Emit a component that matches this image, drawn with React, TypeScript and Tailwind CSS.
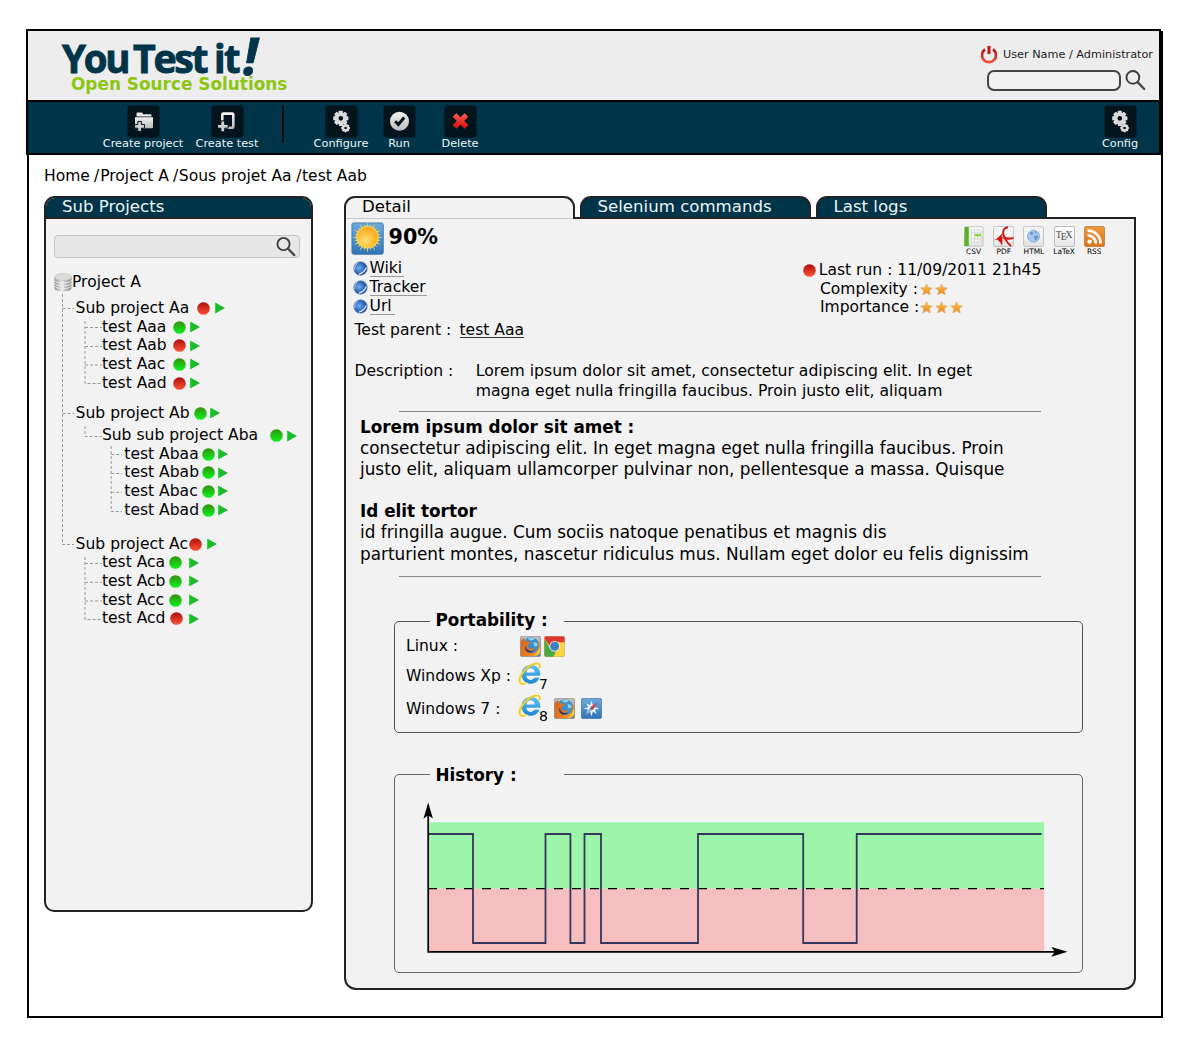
import type { ReactNode } from 'react';

const Magnifier = ({ className }: { className?: string }) => (
  <svg viewBox="0 0 21 21" className={className} fill="none">
    <circle cx="7.9" cy="7.4" r="6.4" stroke="#3c3c3c" strokeWidth="1.9" />
    <path d="M12.6 12.2 L19.2 19" stroke="#4a4a4a" strokeWidth="2.4" strokeLinecap="round" />
  </svg>
);

const Defs = () => (
  <svg className="absolute h-0 w-0" aria-hidden="true">
    <defs>
      <linearGradient id="silver" x1="0" y1="0" x2="0" y2="1">
        <stop offset="0" stopColor="#f2f2f2" />
        <stop offset="1" stopColor="#bdbdbd" />
      </linearGradient>
      <linearGradient id="redDot" x1="0" y1="0" x2="0" y2="1">
        <stop offset="0" stopColor="#ad0d0d" />
        <stop offset="1" stopColor="#fb5537" />
      </linearGradient>
      <linearGradient id="greenDot" x1="0" y1="0" x2="0" y2="1">
        <stop offset="0" stopColor="#358f0c" />
        <stop offset="1" stopColor="#0cf420" />
      </linearGradient>
      <linearGradient id="playFill" x1="0" y1="0" x2="1" y2="0">
        <stop offset="0" stopColor="#0ccb20" />
        <stop offset="1" stopColor="#2ea53a" />
      </linearGradient>
      <linearGradient id="cross" x1="0" y1="0" x2="0" y2="1">
        <stop offset="0" stopColor="#ff5a50" />
        <stop offset="1" stopColor="#d80d0d" />
      </linearGradient>
      <linearGradient id="powerRed" x1="0" y1="0" x2="0" y2="1">
        <stop offset="0" stopColor="#b01010" />
        <stop offset="1" stopColor="#f05038" />
      </linearGradient>
      <linearGradient id="skyBlue" x1="0" y1="0" x2="0" y2="1">
        <stop offset="0" stopColor="#6caadf" />
        <stop offset="1" stopColor="#2f74b8" />
      </linearGradient>
      <radialGradient id="sunFill" cx="0.4" cy="0.65" r="0.65">
        <stop offset="0" stopColor="#ffe07a" />
        <stop offset="0.5" stopColor="#ffc23a" />
        <stop offset="1" stopColor="#fba51e" />
      </radialGradient>
      <radialGradient id="globeFill" cx="0.4" cy="0.45" r="0.6">
        <stop offset="0" stopColor="#6fb0ee" />
        <stop offset="0.6" stopColor="#2f6cbe" />
        <stop offset="1" stopColor="#1c3f98" />
      </radialGradient>
      <linearGradient id="starFill" x1="0" y1="0" x2="0" y2="1">
        <stop offset="0" stopColor="#ffc24a" />
        <stop offset="1" stopColor="#ee8a1d" />
      </linearGradient>
      <linearGradient id="paper" x1="0" y1="0" x2="0" y2="1">
        <stop offset="0" stopColor="#ffffff" />
        <stop offset="1" stopColor="#e4e4e4" />
      </linearGradient>
      <linearGradient id="rssFill" x1="0" y1="0" x2="0" y2="1">
        <stop offset="0" stopColor="#ec9a3c" />
        <stop offset="1" stopColor="#d9731a" />
      </linearGradient>
      <linearGradient id="ieBlue" x1="0" y1="0" x2="0" y2="1">
        <stop offset="0" stopColor="#5cc4f4" />
        <stop offset="1" stopColor="#1d86d2" />
      </linearGradient>
      <linearGradient id="diskFill" x1="0" y1="0" x2="1" y2="0">
        <stop offset="0" stopColor="#8c8c8c" />
        <stop offset="0.4" stopColor="#e6e6e6" />
        <stop offset="1" stopColor="#8a8a8a" />
      </linearGradient>
      <linearGradient id="foxFill" x1="0" y1="0" x2="1" y2="1">
        <stop offset="0" stopColor="#d5651a" />
        <stop offset="0.6" stopColor="#e8791e" />
        <stop offset="1" stopColor="#f9b52a" />
      </linearGradient>
      <linearGradient id="tile" x1="0" y1="0" x2="0" y2="1">
        <stop offset="0" stopColor="#c4c4c4" />
        <stop offset="1" stopColor="#7d7d7d" />
      </linearGradient>
    </defs>
  </svg>
);

const gearTeeth = [0, 45, 90, 135, 180, 225, 270, 315];

const Gear = ({ cx, cy, r }: { cx: number; cy: number; r: number }) => (
  <g transform={`translate(${cx} ${cy}) scale(${r / 8})`}>
    {gearTeeth.map((a) => (
      <rect key={a} x="-2.1" y="-8" width="4.2" height="5" rx="0.6" fill="#dedede" transform={`rotate(${a})`} />
    ))}
    <circle r="4.5" fill="none" stroke="#dadada" strokeWidth="4" />
  </g>
);

const GearsIcon = () => (
  <svg viewBox="0 0 31 31" className="size-[31px]">
    <Gear cx={14.8} cy={12.3} r={7.6} />
    <Gear cx={19.6} cy={22} r={4.3} />
  </svg>
);

const FolderIcon = () => (
  <svg viewBox="0 0 31 31" className="size-[31px]">
    <path d="M8.5 7.5 q0-1 1-1 h4.2 q.8 0 1 .8 l.3 1 h7.5 q1 0 1 1 v1.2 h-15z" fill="#e8e8e8" />
    <path d="M7 11.3 H25 V21.3 q0 .9-.9.9 H7z" fill="url(#silver)" />
    <path d="M9.8 15.4 h3.6 v3.2 h3.2 v3.6 h-3.2 v3.2 h-3.6 v-3.2 H6.6 v-3.6 h3.2z" fill="#d4d4d4" stroke="#03141c" strokeWidth="1" />
  </svg>
);

const TestIcon = () => (
  <svg viewBox="0 0 31 31" className="size-[31px]">
    <rect x="10.3" y="7.6" width="11" height="14.2" rx="1" fill="none" stroke="url(#silver)" strokeWidth="2.6" />
    <path d="M8.9 14.9 h3.8 v3.6 h3.5 v3.7 h-3.5 v3.6 H8.9 v-3.6 H5.5 v-3.7 h3.4z" fill="#cfcfcf" stroke="#03141c" strokeWidth="1" />
  </svg>
);

const RunIcon = () => (
  <svg viewBox="0 0 31 31" className="size-[31px]">
    <circle cx="15.5" cy="15.2" r="9.5" fill="url(#silver)" />
    <path d="M11.2 15.3 L14.4 18.5 L20.2 11.5" fill="none" stroke="#03141c" strokeWidth="3" />
  </svg>
);

const DeleteIcon = () => (
  <svg viewBox="0 0 31 31" className="size-[31px]">
    <path
      d="M8.1 10.8 L11.3 7.6 L15.5 11.8 L19.7 7.6 L22.9 10.8 L18.8 15 L22.9 19.2 L19.7 22.4 L15.5 18.2 L11.3 22.4 L8.1 19.2 L12.2 15z"
      fill="url(#cross)"
      stroke="url(#cross)"
      strokeWidth="0.8"
      strokeLinejoin="round"
    />
  </svg>
);

const Tool = ({ label, children, className }: { label: string; children: ReactNode; className: string }) => (
  <div className={`flex shrink-0 flex-col items-center ${className}`}>
    <div className="size-[31px] rounded-[3px] bg-[#03141c] shadow-[0_0_1px_1px_rgba(2,30,44,0.8)]">{children}</div>
    <span className="-mt-px text-[11.3px] leading-[15px] whitespace-nowrap text-[#eef2f4]">{label}</span>
  </div>
);

const Dot = ({ color }: { color: 'red' | 'green' }) => (
  <svg viewBox="0 0 13 13" className="size-[13px] shrink-0">
    <circle cx="6.5" cy="6.5" r="6.3" fill={color === 'red' ? 'url(#redDot)' : 'url(#greenDot)'} />
  </svg>
);

const Play = () => (
  <svg viewBox="0 0 10 12" className="h-3 w-2.5 shrink-0">
    <path d="M0.2 0.5 L10 6 L0.2 11.5z" fill="url(#playFill)" />
  </svg>
);

type Row = { label: string; color: 'red' | 'green'; row: string; text: string; gap: string };

const rows: Row[] = [
  { label: 'Sub project Aa', color: 'red', row: 'pl-[29.6px]', text: 'w-[121.4px]', gap: 'gap-[5px]' },
  { label: 'test Aaa', color: 'green', row: 'pl-[55.9px]', text: 'w-[71.6px]', gap: 'gap-[3.5px]' },
  { label: 'test Aab', color: 'red', row: 'pl-[55.9px]', text: 'w-[71.1px]', gap: 'gap-[4.5px]' },
  { label: 'test Aac', color: 'green', row: 'pl-[55.9px]', text: 'w-[71.6px]', gap: 'gap-[3.5px]' },
  { label: 'test Aad', color: 'red', row: 'pl-[55.9px]', text: 'w-[71.1px]', gap: 'gap-[4.5px]' },
  { label: 'Sub project Ab', color: 'green', row: 'mt-[11.3px] pl-[29.6px]', text: 'w-[118.2px]', gap: 'gap-[3.5px]' },
  { label: 'Sub sub project Aba', color: 'green', row: 'mt-[4px] pl-[55.9px]', text: 'w-[168.2px]', gap: 'gap-[3.5px]' },
  { label: 'test Abaa', color: 'green', row: '-mt-[0.2px] pl-[78.3px]', text: 'w-[77.5px]', gap: 'gap-[3.3px]' },
  { label: 'test Abab', color: 'green', row: 'pl-[78.3px]', text: 'w-[77.5px]', gap: 'gap-[3.3px]' },
  { label: 'test Abac', color: 'green', row: 'pl-[78.3px]', text: 'w-[77.5px]', gap: 'gap-[3.3px]' },
  { label: 'test Abad', color: 'green', row: 'pl-[78.3px]', text: 'w-[77.5px]', gap: 'gap-[3.3px]' },
  { label: 'Sub project Ac', color: 'red', row: 'mt-[15.3px] pl-[29.6px]', text: 'w-[113.9px]', gap: 'gap-[4.5px]' },
  { label: 'test Aca', color: 'green', row: 'pl-[55.9px]', text: 'w-[67.6px]', gap: 'gap-[6.3px]' },
  { label: 'test Acb', color: 'green', row: 'pl-[55.9px]', text: 'w-[67.6px]', gap: 'gap-[6.3px]' },
  { label: 'test Acc', color: 'green', row: 'pl-[55.9px]', text: 'w-[67.6px]', gap: 'gap-[6.3px]' },
  { label: 'test Acd', color: 'red', row: 'pl-[55.9px]', text: 'w-[67.9px]', gap: 'gap-[6px]' },
];

const TreeLines = () => (
  <svg viewBox="0 0 100 340" className="absolute top-[96px] left-2 h-[340px] w-[100px]" fill="none" stroke="#9a9a9a" strokeDasharray="3 2">
    <path d="M8.5 0 V250.5 H20 M8.5 14.5 H20 M8.5 119.5 H20" />
    <path d="M31 27 V89.5 H48 M31 33.5 H48 M31 52.5 H48 M31 71 H48" />
    <path d="M31 132 V142.5 H48" />
    <path d="M57.2 152 V217.5 H68 M57.2 160.5 H68 M57.2 179.5 H68 M57.2 198.3 H68" />
    <path d="M31 263 V325.5 H48 M31 269.5 H48 M31 288.3 H48 M31 307 H48" />
  </svg>
);

const DiskIcon = () => (
  <svg viewBox="0 0 18 19" className="h-[19px] w-[18px] shrink-0">
    <path d="M0.5 4 V15 Q0.5 18.4 9 18.4 Q17.5 18.4 17.5 15 V4z" fill="url(#diskFill)" />
    <path d="M0.5 7.2 Q1.5 10 9 10 T17.5 7.2 M0.5 10 Q1.5 12.8 9 12.8 T17.5 10 M0.5 12.8 Q1.5 15.6 9 15.6 T17.5 12.8" fill="none" stroke="#f4f4f4" strokeWidth="0.8" />
    <path d="M9 7 V18.4" stroke="#f0f0f0" strokeWidth="1" />
    <ellipse cx="9" cy="4" rx="8.5" ry="3.5" fill="#dcdcdc" stroke="#c2c2c2" strokeWidth="0.6" />
  </svg>
);

const rayAngles = Array.from({ length: 24 }, (_, i) => i * 15);

const SunIcon = () => (
  <svg viewBox="0 0 33 33" className="size-[33px] shrink-0">
    <rect x="0.9" y="0.9" width="31.4" height="31.4" rx="1.8" fill="url(#skyBlue)" stroke="#3e6d9f" strokeWidth="0.8" />
    {rayAngles.map((a, i) => (
      <path key={a} d={i % 2 ? 'M-1 -10 L0 -13.6 L1 -10z' : 'M-1 -10 L0 -15.4 L1 -10z'} fill="#d9d670" transform={`translate(16.5 15.4) rotate(${a})`} />
    ))}
    <circle cx="16.5" cy="15.2" r="10.8" fill="url(#sunFill)" stroke="#ffdf5a" strokeWidth="0.9" />
  </svg>
);

const Globe = () => (
  <svg viewBox="0 0 15 15" className="size-[15px] shrink-0">
    <circle cx="7.5" cy="7.5" r="6.8" fill="url(#globeFill)" stroke="#6b7fb4" strokeWidth="0.6" />
    <path d="M13.4 6.5 Q11.4 11.6 6 13.2" fill="none" stroke="#dfe9f8" strokeWidth="1.3" />
    <path d="M1.6 9 Q1 4.6 4.8 1.6" fill="none" stroke="#b8c8e6" strokeWidth="1" />
  </svg>
);

const Star = () => (
  <svg viewBox="0 0 13 13" className="size-[13px] shrink-0">
    <path d="M6.5 0.8 L8.2 4.6 L12.3 5 L9.2 7.7 L10.2 11.9 L6.5 9.8 L2.8 11.9 L3.8 7.7 L0.7 5 L4.8 4.6z" fill="url(#starFill)" stroke="#d8a873" strokeWidth="0.6" />
  </svg>
);

const Sheet = () => <rect x="0.6" y="0.6" width="19.8" height="19.8" rx="1.4" fill="url(#paper)" stroke="#b5b5b5" strokeWidth="0.8" />;

const CsvIcon = () => (
  <svg viewBox="0 0 21 21" className="size-[21px]">
    <rect x="2" y="0.8" width="18" height="19.4" rx="1" fill="url(#paper)" stroke="#b5b5b5" strokeWidth="0.8" />
    <path d="M1.6 1 h4.2 v19 H1.2z" fill="#5fae2c" />
    <path d="M8.5 4 h9.5 v12 h-9.5z" fill="#fff" stroke="#bdc8b4" strokeWidth="0.7" />
    <path d="M8.5 7 h9.5 M8.5 13 h9.5 M11.5 4 v12 M14.8 4 v12" stroke="#bdc8b4" strokeWidth="0.7" />
    <rect x="11.5" y="8" width="6.5" height="2.4" fill="#86d94c" />
  </svg>
);

const PdfIcon = () => (
  <svg viewBox="0 0 21 21" className="size-[21px]">
    <Sheet />
    <path d="M2.5 2.5 l1.5 2 M5 2.5 l1 2" stroke="#bbb" strokeWidth="0.7" />
    <path d="M15 1.2 Q8.6 2.4 10.6 9 Q12.4 15.4 18 20" fill="none" stroke="#cf1515" strokeWidth="1.9" />
    <path d="M10.4 5.4 Q9.4 12.6 0.8 14.6 Q7.6 10 10.4 5.4z M11 10.6 Q14.6 12.4 20.4 11 V13 Q14.6 14.6 10 12.6z M3.4 13 L9.6 10 L9.2 19.8 Q7.4 15.4 3.4 13z" fill="#cf1515" />
  </svg>
);

const HtmlIcon = () => (
  <svg viewBox="0 0 21 21" className="size-[21px]">
    <Sheet />
    <path d="M2 2.5 h17 M2 5 h4 M15 5 h4 M2 17 h17" stroke="#d8d8d8" strokeWidth="0.8" strokeDasharray="2 1" />
    <circle cx="10.5" cy="10.2" r="6" fill="#a6c8ec" stroke="#7ba2d0" strokeWidth="0.8" />
    <path d="M6.5 7 q2-2 4 0 q-1 2.2-3 1.6z M11 10 q3-1.5 4.3.6 q-1.5 4-3.4 3.6 q-.5-2-1-4.2z M11.6 5 l2.4 1 -1 1.4z" fill="#6393cb" />
  </svg>
);

const TexIcon = () => (
  <div className="flex h-[21px] w-[21px] items-start justify-center rounded-[2px] border border-[#bdbdbd] bg-gradient-to-b from-white to-[#e6e6e6] pt-[3px] font-['Liberation_Serif'] text-[9.5px] leading-[10px] text-[#4a4a4a]">
    <span>T</span>
    <span className="-mx-px pt-[2px]">E</span>
    <span>X</span>
  </div>
);

const RssIcon = () => (
  <svg viewBox="0 0 21 21" className="size-[21px]">
    <rect x="0.5" y="0.5" width="20" height="20" rx="1.6" fill="url(#rssFill)" stroke="#b86f2a" strokeWidth="0.7" />
    <circle cx="5.6" cy="15.6" r="2.2" fill="#fff" />
    <path d="M3.6 9.4 a8 8 0 0 1 8.2 8.2 M3.6 4.6 a13 13 0 0 1 13 13" fill="none" stroke="#fff" strokeWidth="2.7" />
  </svg>
);

const exportsList: { label: string; icon: ReactNode }[] = [
  { label: 'CSV', icon: <CsvIcon /> },
  { label: 'PDF', icon: <PdfIcon /> },
  { label: 'HTML', icon: <HtmlIcon /> },
  { label: 'LaTeX', icon: <TexIcon /> },
  { label: 'RSS', icon: <RssIcon /> },
];

const FirefoxIcon = () => (
  <svg viewBox="0 0 21 21" className="size-[21px] shrink-0">
    <rect x="0.4" y="0.4" width="20.2" height="20.2" rx="1.6" fill="url(#tile)" stroke="#7b7b7b" strokeWidth="0.6" />
    <circle cx="11" cy="9.5" r="8.2" fill="#3f8ec4" />
    <path d="M8 2.2 q4-1.4 7 .6 q-2 2-4 1.6 q-2.4-.4-3-2.2z M13.5 6 q3.5 0 4.5 3 q-2 2.6-4 .6z" fill="#8fd0ea" />
    <path d="M0.8 5.5 Q2.2 2.6 4 2 Q4 4.4 5.4 5.4 Q8.8 5 10.2 6.6 Q9.4 8.4 7.4 8.8 Q6.8 11 9 12.4 Q12 13.4 14.4 11.4 Q13.2 15.8 8.6 15.4 Q14.4 19 17.6 13.4 Q19.6 9.4 18 4.4 Q22 10 19.6 15.6 Q17 20.4 11 20.3 H3 Q0.8 20.3 0.8 18z" fill="url(#foxFill)" />
    <path d="M5.6 9.6 Q6.6 16.4 14.4 14.6 Q11.4 18.2 7.2 16 Q4.4 14 5.6 9.6z" fill="#27407c" />
    <path d="M19.4 10.5 Q19 17 13.4 20 Q20.2 19.4 20.2 15z" fill="#fbd03a" />
  </svg>
);

const ChromeIcon = () => (
  <svg viewBox="0 0 21 21" className="size-[21px] shrink-0">
    <defs>
      <clipPath id="chromeTile">
        <rect x="0.3" y="0.3" width="20.4" height="20.4" rx="1.6" />
      </clipPath>
    </defs>
    <g clipPath="url(#chromeTile)">
      <rect width="21" height="21" fill="#fbd53d" />
      <path d="M0 0 H21 V6.2 H10.5 L6 10.5 L0 1.8z" fill="#df3a32" />
      <path d="M0 2 L6 12.4 L12.4 14.8 L9.2 21 H0z" fill="#4aab48" />
    </g>
    <circle cx="10.7" cy="10.3" r="5.4" fill="#f0f0f0" />
    <circle cx="10.7" cy="10.3" r="4.5" fill="#3d7fc0" />
    <rect x="0.4" y="0.4" width="20.2" height="20.2" rx="1.6" fill="none" stroke="#9a7a5a" strokeOpacity="0.5" strokeWidth="0.6" />
  </svg>
);

const SafariIcon = () => (
  <svg viewBox="0 0 21 21" className="size-[21px] shrink-0">
    <rect x="0.4" y="0.4" width="20.2" height="20.2" rx="1.6" fill="url(#skyBlue)" stroke="#3c6da6" strokeWidth="0.7" />
    <path d="M10.5 2.6 L11.8 7.2 L15.8 5.2 L13.8 9.2 L18.4 10.5 L13.8 11.8 L15.8 15.8 L11.8 13.8 L10.5 18.4 L9.2 13.8 L5.2 15.8 L7.2 11.8 L2.6 10.5 L7.2 9.2 L5.2 5.2 L9.2 7.2z" fill="#eaf3fc" />
    <path d="M16.6 4.2 L11.8 12 L9.2 9.3z" fill="#d9302c" />
    <path d="M4.6 16.8 L9.2 9.3 L11.8 12z" fill="#9fb4cc" />
    <circle cx="10.5" cy="10.6" r="1.2" fill="#3b72b4" />
  </svg>
);

const IeIcon = () => (
  <svg viewBox="0 0 24 24" className="size-6 shrink-0">
    <path
      fillRule="evenodd"
      d="M12.6 2.8 A9.5 9.5 0 0 1 22.2 13.8 H8.4 A4.3 4.3 0 0 0 16.4 15.8 H21.6 A9.5 9.5 0 1 1 12.6 2.8z M8.4 10.4 H16.8 A4.2 4.2 0 0 0 8.4 10.4z"
      fill="url(#ieBlue)"
    />
    <path d="M3.4 21.8 C-1.4 19 4 8.6 12.4 3.6 C17.5 0.4 22.6 0.4 21.6 5.6" fill="none" stroke="#f5cf1f" strokeWidth="2" strokeLinecap="round" />
    <path d="M3.4 21.8 C4.8 22.4 7 21.6 8.6 20.6" fill="none" stroke="#f5cf1f" strokeWidth="1.4" strokeLinecap="round" />
  </svg>
);

const PowerIcon = () => (
  <svg viewBox="0 0 18 19" className="h-[19px] w-[18px]" fill="none">
    <path d="M5 4.4 A7 7 0 1 0 13 4.4" stroke="url(#powerRed)" strokeWidth="2.6" />
    <rect x="7.5" y="0.9" width="3" height="8.2" fill="#c41a16" />
  </svg>
);

const HistoryChart = () => (
  <svg viewBox="0 0 650 160" className="h-[160px] w-[650px]" fill="none">
    <rect x="8" y="22.3" width="616.2" height="66.4" fill="#9cf5a9" />
    <rect x="8" y="88.7" width="616.2" height="63" fill="#f5bfbf" />
    <path d="M8 88.6 H624" stroke="#000" strokeWidth="1.2" strokeDasharray="9 9" />
    <path d="M8 34 H53 V143 H125.5 V34 H150.4 V143 H164.5 V34 H181 V143 H278 V34 H383.2 V143 H436.7 V34 H621.5" stroke="#36365c" strokeWidth="1.8" />
    <path d="M8.2 8 V151.9 H638" stroke="#000" strokeWidth="1.7" />
    <path d="M8.2 2.5 L12.9 18.5 L8.2 15.2 L3.5 18.5z M647.5 151.8 L631.3 156.8 L634.8 151.8 L631.3 147z" fill="#000" />
  </svg>
);

const Legend = ({ title, className }: { title: string; className: string }) => (
  <div className={`absolute left-[35px] w-[134px] bg-[#f2f2f2] pl-[5.5px] text-[16.8px] leading-5 font-bold ${className}`}>{title}</div>
);

const Tab = ({ label }: { label: string }) => (
  <div className="h-[21px] w-[231px] rounded-t-[11px] border-2 border-b-0 border-[#222] bg-[#003549] pl-[15.5px] text-[16.6px] leading-[18px] text-[#eef3f5]">{label}</div>
);

export default function App() {
  return (
    <div className="flex h-[1045px] w-[1200px] bg-white pt-[31px] pl-[27px] font-['DejaVu_Sans',sans-serif] text-[15.55px] whitespace-nowrap text-black">
      <Defs />
      <div className="flex h-[987px] w-[1136px] flex-col border-2 border-black">
        <header className="-mt-1 -ml-[3px] h-[126px] w-[1135px] shrink-0 border-2 border-black bg-[#ededed]">
          <div className="flex h-[69px] justify-between">
            <div className="pl-[34px]">
              <div className="flex h-[45px] font-['Open_Sans'] text-[40px] font-bold text-[#003549] [-webkit-text-stroke:0.9px_#003549]">
                <span className="w-[71px] origin-left scale-x-[0.96] pt-[8px] leading-[38px] tracking-[-2.3px]">You</span>
                <span className="w-[81px] origin-left scale-x-[0.98] pt-[8px] leading-[38px] tracking-[-2.3px]">Test</span>
                <span className="w-[28px] origin-left scale-x-[0.95] pt-[8px] leading-[38px] tracking-[-1.6px]">it</span>
                <span className="pl-[1px] text-[52px] leading-[47px] italic">!</span>
              </div>
              <div className="h-5 pl-[9px] text-[16.9px] leading-[16px] font-bold text-[#8cc611]">Open Source Solutions</div>
            </div>
            <div className="flex flex-col items-end pt-[13px] pr-[6px]">
              <div className="flex items-center gap-[5px] text-[11.25px] leading-[20px] text-[#1c1c1c]">
                <PowerIcon />
                <span className="pt-px">User Name / Administrator</span>
              </div>
              <div className="flex items-center gap-1 pt-[5px] pr-[7px]">
                <div className="h-[21px] w-[134px] rounded-[7px] border-2 border-[#444] bg-[#f1f1f1]" />
                <Magnifier className="size-[21px]" />
              </div>
            </div>
          </div>
          <div className="flex h-[53px] border-t-2 border-black bg-[#003549] pt-[4px]">
            <Tool label="Create project" className="ml-[74px] w-[82px]"><FolderIcon /></Tool>
            <Tool label="Create test" className="ml-[10px] w-[66px]"><TestIcon /></Tool>
            <div className="ml-[22px] h-9 w-0.5 bg-[#020d12]" />
            <Tool label="Configure" className="ml-[28px] w-[58px]"><GearsIcon /></Tool>
            <Tool label="Run" className="ml-[11px] w-[36px]"><RunIcon /></Tool>
            <Tool label="Delete" className="ml-[23px] w-[40px]"><DeleteIcon /></Tool>
            <Tool label="Config" className="ml-auto mr-[19px] w-[40px]"><GearsIcon /></Tool>
          </div>
        </header>

        <nav className="mt-[11px] flex h-5 pl-[15px] leading-5">
          <span className="w-[50px]">Home</span>
          <span className="w-[6.2px]">/</span>
          <span className="w-[72.8px]">Project A</span>
          <span className="w-[5.8px]">/</span>
          <span className="w-[117.5px]">Sous projet Aa</span>
          <span className="w-[5.7px]">/</span>
          <span>test Aab</span>
        </nav>

        <div className="mt-[10px] flex pl-[15px]">
          <aside className="relative h-[716px] w-[269px] rounded-t-[11px] rounded-b-[10px] border-2 border-[#222] bg-[#f2f2f2]">
            <h2 className="h-[21px] rounded-t-[9px] border-b-2 border-[#222] bg-[#003549] pl-4 text-[16.6px] leading-[18px] text-[#eef3f5]">Sub Projects</h2>
            <div className="mt-4 ml-2 flex h-[23px] w-[246px] items-center justify-end rounded-[4px] border border-[#c4c4c4] bg-[#e7e7e7] pr-[3px]">
              <Magnifier className="size-[20px]" />
            </div>
            <TreeLines />
            <div className="mt-[14px] flex h-[20px] items-center pl-2 leading-5">
              <DiskIcon />
              <span>Project A</span>
            </div>
            <div className="pt-[7.1px]">
              {rows.map((r) => (
                <div key={r.label} className={`flex h-[18.67px] items-center leading-[18.67px] ${r.row}`}>
                  <span className={r.text}>{r.label}</span>
                  <span className={`flex items-center ${r.gap}`}>
                    <Dot color={r.color} />
                    <Play />
                  </span>
                </div>
              ))}
            </div>
          </aside>

          <main className="ml-[31px] flex w-[792px] flex-col">
            <div className="flex h-[21px] shrink-0 gap-[5px]">
              <div className="relative z-10 h-[23px] w-[231px] rounded-t-[11px] border-2 border-b-0 border-[#222] bg-[#f2f2f2] pl-[16px] text-[16.6px] leading-[18px]">
                Detail
                <div className="absolute bottom-0 left-0 h-px w-[227px] bg-[#c9c9c9]" />
              </div>
              <Tab label="Selenium commands" />
              <Tab label="Last logs" />
            </div>
            <section className="h-[773px] rounded-b-[12px] border-2 border-[#222] bg-[#f2f2f2]">
              <div className="flex justify-between">
                <div className="pt-[3px] pl-[5px]">
                  <div className="flex h-[34px] items-start gap-[4.5px]">
                    <SunIcon />
                    <span className="text-[20.7px] leading-[30px] font-bold">90%</span>
                  </div>
                  <ul className="pt-[3.4px] pl-[1.5px] leading-[18.7px]">
                    <li className="flex h-[18.7px] items-center gap-[2px]">
                      <Globe />
                      <a className="h-[17px] w-[34px] border-b border-[#999] leading-[17px]">Wiki</a>
                    </li>
                    <li className="flex h-[18.7px] items-center gap-[2px]">
                      <Globe />
                      <a className="h-[17px] w-[57px] border-b border-[#999] leading-[17px]">Tracker</a>
                    </li>
                    <li className="flex h-[18.7px] items-center gap-[2px]">
                      <Globe />
                      <a className="h-[17px] w-[25px] border-b border-[#999] leading-[17px]">Url</a>
                    </li>
                  </ul>
                  <div className="mt-[4.6px] flex pl-[3.5px] leading-5">
                    <span className="w-[105px]">Test parent :</span>
                    <a className="h-[18px] border-b border-[#333]">test Aaa</a>
                  </div>
                </div>
                <div className="flex w-[333px] flex-col pt-[7px]">
                  <div className="flex gap-[9.2px] pl-[162px]">
                    {exportsList.map((e) => (
                      <div key={e.label} className="flex w-[21px] flex-col items-center">
                        {e.icon}
                        <span className="text-[7.4px] leading-[10px]">{e.label}</span>
                      </div>
                    ))}
                  </div>
                  <div className="mt-[4px] flex h-[18.7px] items-center gap-[2px] pl-[2.4px] leading-[18.7px]">
                    <Dot color="red" />
                    <span className="pl-[0.4px]">Last run : 11/09/2011 21h45</span>
                  </div>
                  <div className="flex h-[18.7px] items-center pl-[19px] leading-[18.7px]">
                    <span className="w-[100px]">Complexity :</span>
                    <span className="flex gap-[2px]"><Star /><Star /></span>
                  </div>
                  <div className="flex h-[18.7px] items-center pl-[19px] leading-[18.7px]">
                    <span className="w-[100px]">Importance :</span>
                    <span className="flex gap-[2px]"><Star /><Star /><Star /></span>
                  </div>
                </div>
              </div>

              <div className="mt-[21px] flex pl-[8.5px] leading-5">
                <span className="w-[121.3px]">Description :</span>
                <p className="text-[15.65px]">
                  Lorem ipsum dolor sit amet, consectetur adipiscing elit. In eget
                  <br />
                  magna eget nulla fringilla faucibus. Proin justo elit, aliquam
                </p>
              </div>
              <div className="mt-[10px] ml-[53px] h-px w-[642px] bg-[#888]" />
              <article className="mt-[5px] pl-[14px] text-[16.87px] leading-[21.1px]">
                <h3 className="text-[16.83px] font-bold">Lorem ipsum dolor sit amet :</h3>
                <p>consectetur adipiscing elit. In eget magna eget nulla fringilla faucibus. Proin</p>
                <p>justo elit, aliquam ullamcorper pulvinar non, pellentesque a massa. Quisque</p>
                <h3 className="mt-[21px] text-[16.83px] font-bold">Id elit tortor</h3>
                <p>id fringilla augue. Cum sociis natoque penatibus et magnis dis</p>
                <p>parturient montes, nascetur ridiculus mus. Nullam eget dolor eu felis dignissim</p>
              </article>
              <div className="mt-[11px] ml-[53px] h-px w-[642px] bg-[#888]" />

              <div className="relative mt-[44px] ml-12 h-[112px] w-[689px] rounded-[5px] border border-[#555] pt-[13px] pl-[11px]">
                <Legend title="Portability :" className="-top-[12px]" />
                <div className="flex h-[24px] items-start">
                  <span className="w-[114px] leading-[22px]">Linux :</span>
                  <span className="flex gap-[3px] pt-[1.5px]"><FirefoxIcon /><ChromeIcon /></span>
                </div>
                <div className="mt-[3px] flex h-[30px]">
                  <span className="w-[112px] pt-[4px] leading-5">Windows Xp :</span>
                  <IeIcon />
                  <span className="-ml-[3px] self-end text-[14px] leading-[16px]">7</span>
                </div>
                <div className="mt-[2px] flex h-[30px]">
                  <span className="w-[112px] pt-[5px] leading-5">Windows 7 :</span>
                  <IeIcon />
                  <span className="-ml-[3px] w-[15px] self-end text-[14px] leading-[15px]">8</span>
                  <span className="flex gap-[6px] pt-[4px]"><FirefoxIcon /><SafariIcon /></span>
                </div>
              </div>

              <div className="relative mt-[41px] ml-12 h-[199px] w-[689px] rounded-[5px] border border-[#666] pt-[25px] pl-[25px]">
                <Legend title="History :" className="-top-[10px]" />
                <HistoryChart />
              </div>
            </section>
          </main>
        </div>
      </div>
    </div>
  );
}
